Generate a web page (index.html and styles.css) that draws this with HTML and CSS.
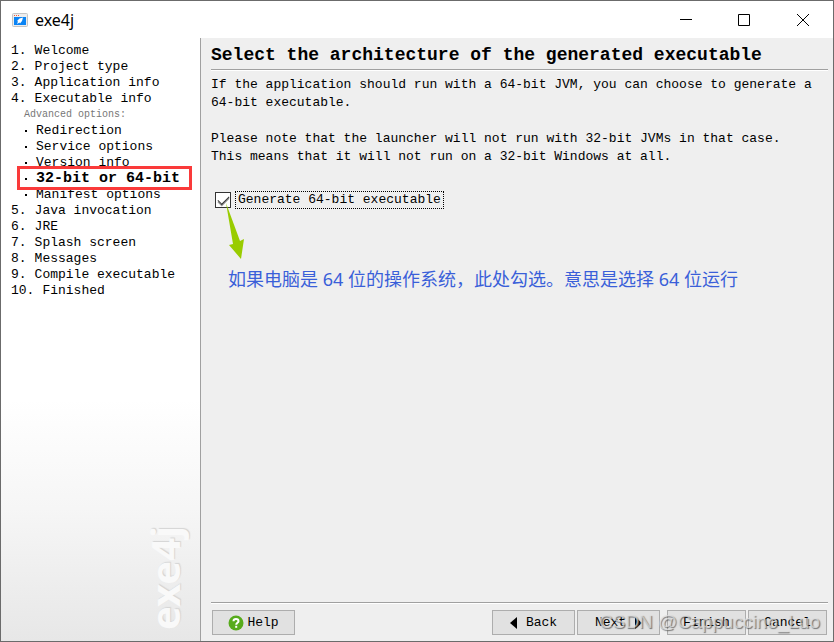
FILE: index.html
```html
<!DOCTYPE html>
<html lang="en">
<head>
  <meta charset="UTF-8">
  <meta name="viewport" content="width=device-width, initial-scale=1.0">
  <title>exe4j</title>
  <link rel="stylesheet" href="styles.css">
</head>
<body>

  <div class="window">
    <header class="titlebar">
      <svg class="app-icon" width="16" height="14" viewBox="0 0 16 14">
        <rect x="0.5" y="0.5" width="15" height="13" rx="1" fill="#ededed" stroke="#c4c4c4"/>
        <path d="M2 2h1v1H2zM4 2h1v1H4zM6 2h1v1H6z" fill="#f0583c"/>
        <rect x="2" y="4" width="12" height="8" fill="#0a84f5"/>
        <path d="M11 4.600L7.500 5.600 5 8l1 .5L5 11l2.500-1.500.5 1 2-2.500z" fill="#fff"/>
      </svg>
      <h1>exe4j</h1>
      <div class="window-buttons">
        <button type="button" aria-label="Minimize">
          <svg width="12" height="12" viewBox="0 0 12 12"><path d="M0 5.500h12"/></svg>
        </button>
        <button type="button" aria-label="Maximize">
          <svg width="12" height="12" viewBox="0 0 12 12"><path d="M.5.5h11v11H.5z"/></svg>
        </button>
        <button type="button" aria-label="Close">
          <svg width="12" height="12" viewBox="0 0 12 12"><path d="M0 0l12 12M12 0L0 12"/></svg>
        </button>
      </div>
    </header>

    <div class="body">
      <nav class="sidebar">
        <ul class="steps">
          <li><span class="num">1.</span>Welcome</li>
          <li><span class="num">2.</span>Project type</li>
          <li><span class="num">3.</span>Application info</li>
          <li><span class="num">4.</span>Executable info</li>
          <li class="sub-title">Advanced options:</li>
          <li class="sub">Redirection</li>
          <li class="sub">Service options</li>
          <li class="sub">Version info</li>
          <li class="sub current">32-bit or 64-bit</li>
          <li class="sub">Manifest options</li>
          <li><span class="num">5.</span>Java invocation</li>
          <li><span class="num">6.</span>JRE</li>
          <li><span class="num">7.</span>Splash screen</li>
          <li><span class="num">8.</span>Messages</li>
          <li><span class="num">9.</span>Compile executable</li>
          <li><span class="num">10.</span>Finished</li>
        </ul>
        <div class="brand">exe4j</div>
      </nav>

      <main class="content">
        <h2>Select the architecture of the generated executable</h2>
        <p>If the application should run with a 64-bit JVM, you can choose to generate a 64-bit executable.</p>
        <p>Please note that the launcher will not run with 32-bit JVMs in that case.<br>
          This means that it will not run on a 32-bit Windows at all.</p>

        <div class="option">
          <input type="checkbox" id="generate64" checked>
          <label for="generate64">Generate 64-bit executable</label>
          <svg class="arrow" width="18" height="56" viewBox="0 0 18 56">
            <path d="M0 0L14 38 18 36 15 56 3 42l4-1z" fill="#99cc00"/>
          </svg>
        </div>
        <div class="note" lang="zh-CN">如果电脑是 64 位的操作系统，此处勾选。意思是选择 64 位运行</div>

        <footer class="actions">
          <button type="button" class="btn help">
            <svg width="16" height="16" viewBox="0 0 16 16">
              <circle cx="8" cy="8" r="7.500" fill="#57ab1c"/>
              <path d="M5.500 6.200C5.500 3.200 10.500 3.200 10.500 6.200 10.500 7.800 8.200 7.800 8.200 9.800" fill="none" stroke="#fff" stroke-width="2"/>
              <path d="M7.200 10.800h2v2h-2z" fill="#fff"/>
            </svg>
            Help
          </button>
          <button type="button" class="btn">
            <svg width="8" height="12" viewBox="0 0 8 12"><path d="M7 0v12L0 6z"/></svg>
            Back
          </button>
          <button type="button" class="btn">
            Next
            <svg width="8" height="12" viewBox="0 0 8 12"><path d="M1 0v12l7-6z"/></svg>
          </button>
          <button type="button" class="btn narrow finish">Finish</button>
          <button type="button" class="btn narrow">Cancel</button>
        </footer>
      </main>
    </div>

    <div class="watermark">CSDN @Cappuccino_Luo</div>
  </div>

</body>
</html>
```
FILE: styles.css
```css
* {
  box-sizing: border-box;
}

body {
  margin: 0;
  font-family: "Liberation Mono", monospace;
  font-size: 13px;
  color: #000;
}

.window {
  position: relative;
  display: flex;
  flex-direction: column;
  min-height: 100vh;
  border: 1px solid #6b6b6b;
  background-color: #fff;
}

/* Title bar */
.titlebar {
  display: flex;
  align-items: center;
  height: 37px;
  padding-left: 11px;
}

.titlebar h1 {
  flex: 1;
  margin: 0 0 0 7px;
  font-family: "Noto Sans", sans-serif;
  font-size: 16px;
  line-height: 20px;
  font-weight: normal;
}

.window-buttons {
  display: flex;
}

.window-buttons button {
  display: flex;
  align-items: center;
  justify-content: center;
  width: 58px;
  height: 37px;
  padding: 0;
  border: none;
  background: none;
}

.window-buttons button:last-child {
  width: 60px;
}

.window-buttons path {
  fill: none;
  stroke: #000;
}

.body {
  display: flex;
  flex: 1;
}

/* Steps on the left */
.sidebar {
  display: flex;
  flex-direction: column;
  justify-content: space-between;
  width: 200px;
  flex-shrink: 0;
  padding: 5px 8px 11px 10px;
  border-right: 1px solid #a0a0a0;
  background: linear-gradient(#fff 60%, #f6f6f6 78%, #e7e7e7);
}

.steps {
  margin: 0;
  padding: 0;
  list-style: none;
  line-height: 16px;
  white-space: nowrap;
}

.num {
  padding-right: 8px;
}

.sub-title {
  padding-left: 13px;
  font-size: 10px;
  color: #777;
}

.sub {
  display: flex;
  align-items: center;
  padding-left: 14px;
}

.sub::before {
  content: "";
  width: 2px;
  height: 2px;
  margin-right: 9px;
  background-color: #000;
}

.current {
  position: relative;
  z-index: 1;
  font-size: 15px;
  font-weight: bold;
}

.current::after {
  content: "";
  position: absolute;
  z-index: -1;
  top: -5px;
  bottom: -3px;
  left: 6px;
  right: 0;
  border: 3px solid #fa3a3a;
  background-color: #fff;
}

.brand {
  align-self: flex-end;
  margin-right: 7px;
  writing-mode: vertical-rl;
  transform: rotate(180deg);
  font-family: "Noto Sans", sans-serif;
  font-size: 40px;
  font-weight: bold;
  line-height: 40px;
  color: #f9f9f9;
  text-shadow: 1px 1px 1px #d4d4d4;
}

/* Right side */
.content {
  display: flex;
  flex-direction: column;
  flex: 1;
  min-width: 0;
  padding: 5px 5px 6px 10px;
  background-color: #efefef;
}

.content h2 {
  margin: 0 0 6px;
  padding-bottom: 2px;
  border-bottom: 1px solid #a0a0a0;
  box-shadow: 0 1px #fff;
  font-size: 18px;
  line-height: 24px;
}

.content p {
  margin: 0 0 18px;
  line-height: 18px;
}

.option {
  position: relative;
  display: flex;
  align-items: center;
  margin-top: 7px;
  padding-left: 4px;
}

.option input {
  appearance: none;
  width: 16px;
  height: 16px;
  margin: 0 4px 0 0;
  border: 1px solid #333;
  background-color: #fff;
}

.option input:checked::before {
  content: "";
  display: block;
  width: 10px;
  height: 5px;
  margin: 3px 2px;
  border-left: 1px solid #333;
  border-bottom: 1px solid #333;
  box-shadow: -1px 1px #999;
  transform: rotate(-45deg);
}

.option label {
  padding: 0 2px;
  border: 1px dotted #000;
  line-height: 16px;
}

.arrow {
  position: absolute;
  top: 12px;
  left: 15px;
}

.note {
  margin: 56px 0 0 17px;
  font-family: "Noto Sans", "Noto Sans CJK SC", sans-serif;
  font-size: 18px;
  line-height: 28px;
  color: #3a5fd9;
}

.actions {
  display: flex;
  gap: 2px;
  margin-top: auto;
  padding: 7px 1px 0;
  border-top: 1px solid #a0a0a0;
  box-shadow: inset 0 1px #fff;
}

.btn {
  display: flex;
  align-items: center;
  justify-content: center;
  gap: 8px;
  width: 83px;
  height: 25px;
  padding: 0;
  border: 1px solid #adadad;
  background-color: #e1e1e1;
  font-family: inherit;
  font-size: 13px;
  color: #000;
}

.help {
  gap: 3px;
  margin-right: auto;
}

.narrow {
  width: 79px;
}

.finish {
  margin-left: 5px;
}

.btn:hover {
  background-color: #e5f1fb;
}

.watermark {
  position: absolute;
  right: 13px;
  bottom: 7px;
  font-family: "Liberation Sans", sans-serif;
  font-size: 19px;
  line-height: 24px;
  color: rgba(225, 225, 225, 0.7);
  text-shadow: 1px 1px 1px rgba(70, 70, 70, 0.7);
  pointer-events: none;
}
```
